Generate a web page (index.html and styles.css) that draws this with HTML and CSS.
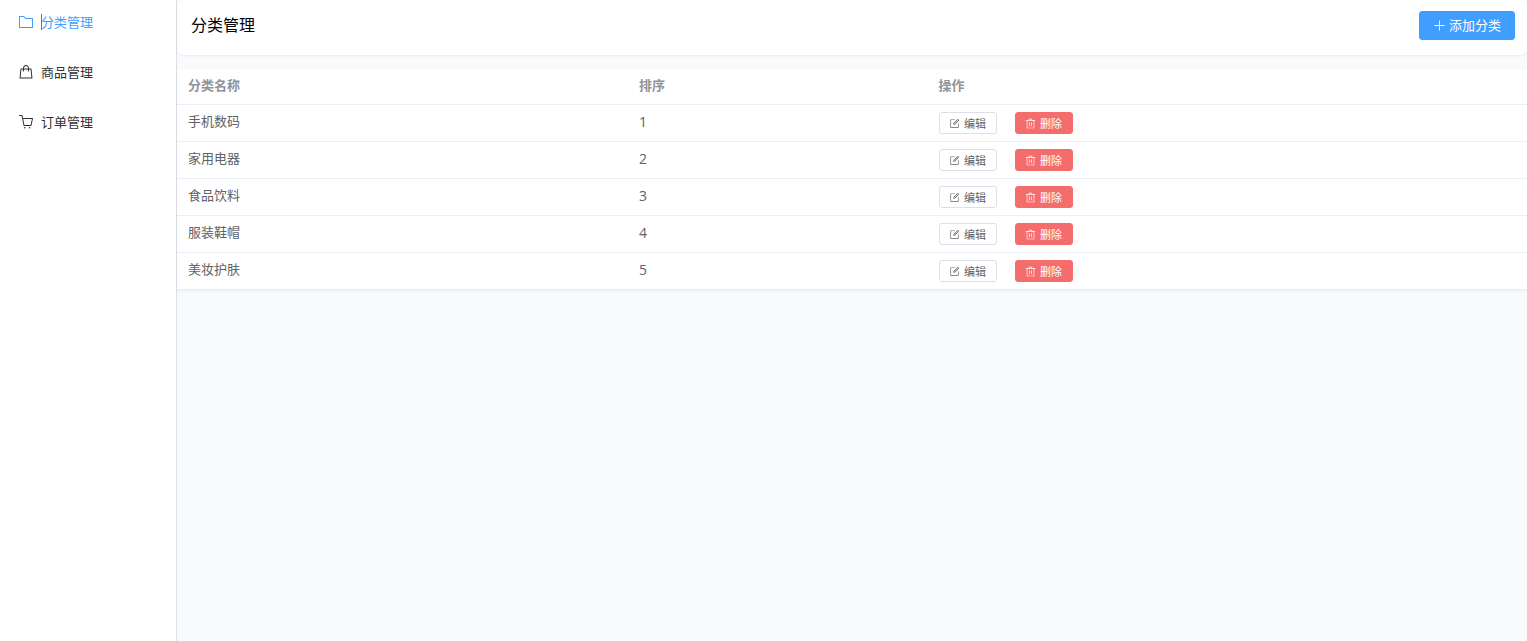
FILE: index.html
```
<!DOCTYPE html>
<html lang="zh-CN">
<head>
    <meta charset="UTF-8">
    <meta name="viewport" content="width=device-width, initial-scale=1.0">
    <title>分类管理</title>
    <link rel="stylesheet" href="styles.css">
</head>
<body>

<svg class="sprite" aria-hidden="true">
    <symbol id="edit" viewBox="0 0 1024 1024">
        <path d="M832 512a32 32 0 1 1 64 0v352a32 32 0 0 1-32 32H160a32 32 0 0 1-32-32V160a32 32 0 0 1 32-32h352a32 32 0 0 1 0 64H192v640h640z"/>
        <path d="m469.952 554.24 52.8-7.552L847.104 222.4a32 32 0 1 0-45.248-45.248L477.44 501.44l-7.552 52.8zm422.4-422.4a96 96 0 0 1 0 135.808l-331.84 331.84a32 32 0 0 1-18.112 9.088L436.8 623.68a32 32 0 0 1-36.224-36.224l15.104-105.6a32 32 0 0 1 9.024-18.112l331.904-331.84a96 96 0 0 1 135.744 0z"/>
    </symbol>
    <symbol id="delete" viewBox="0 0 1024 1024">
        <path d="M160 256H96a32 32 0 0 1 0-64h256V95.936a32 32 0 0 1 32-32h256a32 32 0 0 1 32 32V192h256a32 32 0 1 1 0 64h-64v672a32 32 0 0 1-32 32H192a32 32 0 0 1-32-32zm448-64v-64H416v64zM224 896h576V256H224zm192-128a32 32 0 0 1-32-32V416a32 32 0 0 1 64 0v320a32 32 0 0 1-32 32m192 0a32 32 0 0 1-32-32V416a32 32 0 0 1 64 0v320a32 32 0 0 1-32 32"/>
    </symbol>
</svg>

<div class="layout">
    <nav class="sidebar">
        <a class="menu-item active" href="#category">
            <svg class="menu-icon" viewBox="0 0 1024 1024"><path d="M128 192v640h768V320H485.76L357.504 192H128zm-32-64h287.872l128.384 128H928a32 32 0 0 1 32 32v576a32 32 0 0 1-32 32H96a32 32 0 0 1-32-32V160a32 32 0 0 1 32-32"/></svg>
            <span class="menu-text">分类管理</span>
        </a>
        <a class="menu-item" href="#goods">
            <svg class="menu-icon" viewBox="0 0 1024 1024"><path d="M320 288v-22.336C320 154.688 405.504 64 512 64s192 90.688 192 201.664v22.4h131.072a32 32 0 0 1 31.808 28.8l57.6 576a32 32 0 0 1-31.808 35.2H131.328a32 32 0 0 1-31.808-35.2l57.6-576a32 32 0 0 1 31.808-28.8H320zm64 0h256v-22.336C640 189.248 582.272 128 512 128c-70.272 0-128 61.248-128 137.664v22.4zm-64 64H217.92l-51.2 512h690.56l-51.264-512H704v96a32 32 0 1 1-64 0v-96H384v96a32 32 0 0 1-64 0v-96z"/></svg>
            <span class="menu-text">商品管理</span>
        </a>
        <a class="menu-item" href="#order">
            <svg class="menu-icon" viewBox="0 0 1024 1024"><path d="M432 928a48 48 0 1 1 0-96 48 48 0 0 1 0 96m320 0a48 48 0 1 1 0-96 48 48 0 0 1 0 96M96 128a32 32 0 0 1 0-64h160a32 32 0 0 1 31.36 25.728L320.64 256H928a32 32 0 0 1 31.296 38.72l-96 448A32 32 0 0 1 832 768H384a32 32 0 0 1-31.36-25.728L229.76 128zm314.24 576h395.904l82.304-384H333.44l76.8 384z"/></svg>
            <span class="menu-text">订单管理</span>
        </a>
    </nav>

    <main class="content">
        <header class="page-header">
            <h1>分类管理</h1>
            <button class="btn btn-primary" type="button">
                <svg class="btn-icon" viewBox="0 0 1024 1024"><path d="M480 480V128a32 32 0 0 1 64 0v352h352a32 32 0 1 1 0 64H544v352a32 32 0 1 1-64 0V544H128a32 32 0 0 1 0-64z"/></svg>
                添加分类
            </button>
        </header>

        <table class="category-table">
            <thead>
                <tr>
                    <th class="col-name">分类名称</th>
                    <th class="col-sort">排序</th>
                    <th>操作</th>
                </tr>
            </thead>
            <tbody>
                <tr>
                    <td>手机数码</td>
                    <td class="sort">1</td>
                    <td class="operate">
                        <div class="actions">
                            <button class="btn btn-small" type="button"><svg class="btn-icon"><use href="#edit"/></svg>编辑</button>
                            <button class="btn btn-small btn-danger" type="button"><svg class="btn-icon"><use href="#delete"/></svg>删除</button>
                        </div>
                    </td>
                </tr>
                <tr>
                    <td>家用电器</td>
                    <td class="sort">2</td>
                    <td class="operate">
                        <div class="actions">
                            <button class="btn btn-small" type="button"><svg class="btn-icon"><use href="#edit"/></svg>编辑</button>
                            <button class="btn btn-small btn-danger" type="button"><svg class="btn-icon"><use href="#delete"/></svg>删除</button>
                        </div>
                    </td>
                </tr>
                <tr>
                    <td>食品饮料</td>
                    <td class="sort">3</td>
                    <td class="operate">
                        <div class="actions">
                            <button class="btn btn-small" type="button"><svg class="btn-icon"><use href="#edit"/></svg>编辑</button>
                            <button class="btn btn-small btn-danger" type="button"><svg class="btn-icon"><use href="#delete"/></svg>删除</button>
                        </div>
                    </td>
                </tr>
                <tr>
                    <td>服装鞋帽</td>
                    <td class="sort">4</td>
                    <td class="operate">
                        <div class="actions">
                            <button class="btn btn-small" type="button"><svg class="btn-icon"><use href="#edit"/></svg>编辑</button>
                            <button class="btn btn-small btn-danger" type="button"><svg class="btn-icon"><use href="#delete"/></svg>删除</button>
                        </div>
                    </td>
                </tr>
                <tr>
                    <td>美妆护肤</td>
                    <td class="sort">5</td>
                    <td class="operate">
                        <div class="actions">
                            <button class="btn btn-small" type="button"><svg class="btn-icon"><use href="#edit"/></svg>编辑</button>
                            <button class="btn btn-small btn-danger" type="button"><svg class="btn-icon"><use href="#delete"/></svg>删除</button>
                        </div>
                    </td>
                </tr>
            </tbody>
        </table>
    </main>
</div>

</body>
</html>
```
FILE: styles.css
```
* {
    box-sizing: border-box;
}

body {
    margin: 0;
    font-family: "Open Sans", "Noto Sans CJK SC", sans-serif;
    font-size: 13px;
    color: #303133;
}

.sprite {
    display: none;
}

.layout {
    display: flex;
    min-height: 100vh;
}

/* sidebar */
.sidebar {
    display: flex;
    flex-direction: column;
    flex: none;
    gap: 30px;
    width: 177px;
    padding: 12px 18px;
    background-color: #fff;
    border-right: 1px solid #dcdfe6;
}

.menu-item {
    display: flex;
    align-items: center;
    gap: 7px;
    height: 20px;
    line-height: 20px;
    color: #303133;
    text-decoration: none;
}

.menu-item.active {
    color: #409eff;
}

.menu-icon {
    width: 16px;
    height: 16px;
    fill: currentColor;
}

.menu-text {
    position: relative;
}

/* caret in front of the selected item */
.menu-item.active .menu-text::before {
    content: "";
    position: absolute;
    top: 2px;
    left: 0;
    width: 1px;
    height: 16px;
    background-color: #337ecc;
}

/* content */
.content {
    flex: 1;
    background-color: #f8fafc;
}

.page-header {
    display: flex;
    justify-content: space-between;
    align-items: flex-start;
    margin-bottom: 14px;
    padding: 11px 12px 15px 14px;
    background-color: #fff;
    border-radius: 7px;
    box-shadow: 0 1px 3px rgba(0, 0, 0, 0.06);
}

h1 {
    margin: 0;
    font-size: 16px;
    font-weight: 400;
    line-height: 29px;
    color: #000;
}

.btn {
    display: inline-flex;
    align-items: center;
    justify-content: center;
    border: 1px solid #dcdfe6;
    border-radius: 3px;
    background-color: #fff;
    color: #606266;
    font-family: inherit;
    line-height: 1;
    cursor: pointer;
}

.btn-icon {
    width: 1em;
    height: 1em;
    fill: currentColor;
}

.btn-primary {
    gap: 3px;
    height: 29px;
    padding: 0 13px;
    border-color: #409eff;
    background-color: #409eff;
    color: #fff;
    font-size: 13px;
}

.btn-small {
    gap: 4px;
    min-width: 58px;
    height: 22px;
    padding: 0 9px;
    font-size: 11px;
}

.btn-danger {
    border-color: #f56c6c;
    background-color: #f56c6c;
    color: #fff;
}

/* table */
.category-table {
    width: 100%;
    table-layout: fixed;
    border-collapse: separate;
    border-spacing: 0;
    background-color: #fff;
    box-shadow: 0 1px 3px rgba(0, 0, 0, 0.06);
}

.col-name {
    width: 33.4%;
}

.col-sort {
    width: 22.2%;
}

th,
td {
    padding: 6px 11px 8px;
    border-bottom: 1px solid #ebeef5;
    line-height: 21px;
    text-align: left;
    vertical-align: top;
    color: #606266;
}

th {
    font-weight: 700;
    color: #909399;
}

.sort {
    font-size: 14px;
}

.operate {
    padding: 7px 11px;
}

.actions {
    display: flex;
    gap: 18px;
}
```
